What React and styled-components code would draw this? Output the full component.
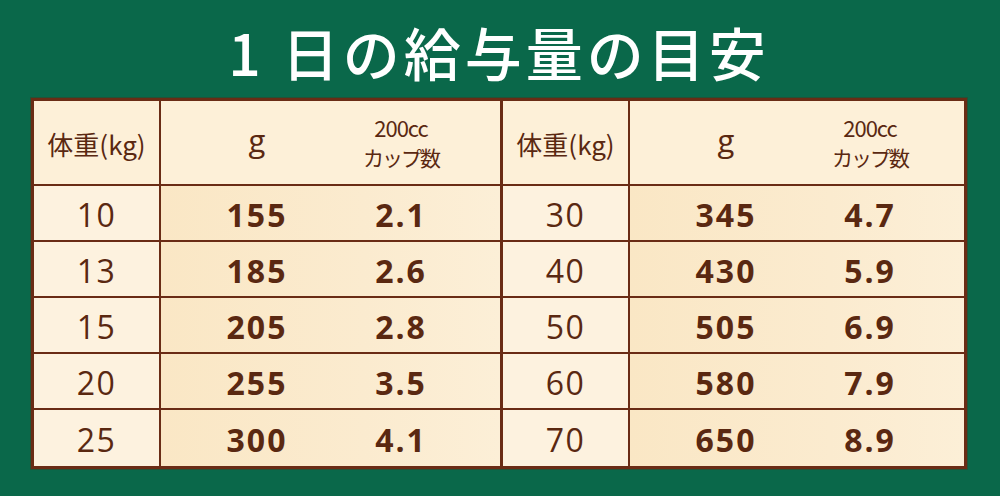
import React from "react";
import styled, { createGlobalStyle } from "styled-components";

const GlobalStyle = createGlobalStyle`
  html, body {
    margin: 0;
    padding: 0;
    background: #0a684a;
  }
  * { box-sizing: border-box; }
`;

const brown = "#6a2c15";
const ink = "#5a2811";

const left = [
  ["10", "155", "2.1"],
  ["13", "185", "2.6"],
  ["15", "205", "2.8"],
  ["20", "255", "3.5"],
  ["25", "300", "4.1"],
];

const right = [
  ["30", "345", "4.7"],
  ["40", "430", "5.9"],
  ["50", "505", "6.9"],
  ["60", "580", "7.9"],
  ["70", "650", "8.9"],
];

const Page = styled.div`
  width: 1000px;
  height: 496px;
  background: #0a684a;
  display: flex;
  flex-direction: column;
  align-items: flex-start;
  padding-left: 31px;
  overflow: hidden;
`;

const Title = styled.h1`
  margin: 0;
  width: 936px;
  height: 98px;
  padding-top: 3px;
  display: flex;
  align-items: center;
  justify-content: center;
  color: #ffffff;
  font-family: "Noto Sans CJK JP", "Noto Sans", sans-serif;
  font-weight: 500;
  font-size: 57px;
  letter-spacing: 4px;
  white-space: pre;
`;

const Table = styled.div`
  width: 936px;
  display: flex;
  border: 3px solid ${brown};
  box-shadow: 0 0 0 1px rgba(90, 40, 17, 0.35);
`;

const Half = styled.div`
  flex: ${(p) => (p.$first ? "0 0 466px" : "1 1 auto")};
  display: grid;
  grid-template-columns: 127px 1fr;
  grid-template-rows: 85px repeat(5, 56px);
  border-left: ${(p) => (p.$first ? "none" : `3px solid ${brown}`)};

  & > *:nth-last-child(-n + 2) {
    border-bottom: none;
  }
`;

const WeightCell = styled.div`
  display: flex;
  align-items: center;
  justify-content: center;
  border-right: 2px solid ${brown};
  border-bottom: 2px solid ${brown};
  background: ${(p) => (p.$head ? "#fdf0d8" : "#fdf2df")};
  color: ${ink};
  font-family: "Open Sans", "Noto Sans", sans-serif;
  font-size: 32px;
  letter-spacing: 1.5px;
  padding-top: 2px;
`;

const ValueCell = styled.div`
  display: grid;
  grid-template-columns: 192px 96px;
  align-items: center;
  border-bottom: 2px solid ${brown};
  background: ${(p) =>
    p.$head ? "#fdf0d8" : "linear-gradient(90deg, #fae7c5 0%, #fbebcf 60%, #fcefd7 100%)"};
  color: ${ink};
`;

const Num = styled.span`
  text-align: center;
  font-family: "Open Sans", "Noto Sans", sans-serif;
  font-weight: 700;
  font-size: 32px;
  letter-spacing: 2px;
  padding-top: 2px;
`;

const HeadLabel = styled.span`
  display: block;
  text-align: center;
  white-space: nowrap;
  font-family: "Noto Sans CJK JP", "Noto Sans", sans-serif;
  font-size: ${(p) => p.$size || 25}px;
  letter-spacing: ${(p) => p.$track || 0}px;
  line-height: ${(p) => p.$lh || 1.2};
  color: ${ink};
`;

const GramHead = styled.span`
  text-align: center;
  font-family: "Open Sans", "Noto Sans", sans-serif;
  font-size: 31px;
  color: ${ink};
  padding-bottom: 6px;
`;

const CupHead = styled.div`
  display: flex;
  flex-direction: column;
  align-items: center;
  gap: 0;
`;

function HalfTable({ rows, first }) {
  return (
    <Half $first={first}>
      <WeightCell $head>
        <HeadLabel $size={26}>体重(kg)</HeadLabel>
      </WeightCell>
      <ValueCell $head>
        <GramHead>g</GramHead>
        <CupHead>
          <HeadLabel $size={22} $track={-1} $lh={1.35}>200cc</HeadLabel>
          <HeadLabel $size={21} $track={-2} $lh={1.4}>カップ数</HeadLabel>
        </CupHead>
      </ValueCell>
      {rows.map(([w, g, c]) => (
        <React.Fragment key={w}>
          <WeightCell>{w}</WeightCell>
          <ValueCell>
            <Num>{g}</Num>
            <Num>{c}</Num>
          </ValueCell>
        </React.Fragment>
      ))}
    </Half>
  );
}

export default function App() {
  return (
    <>
      <GlobalStyle />
      <Page>
        <Title>1 日の給与量の目安</Title>
        <Table>
          <HalfTable rows={left} first />
          <HalfTable rows={right} />
        </Table>
      </Page>
    </>
  );
}
